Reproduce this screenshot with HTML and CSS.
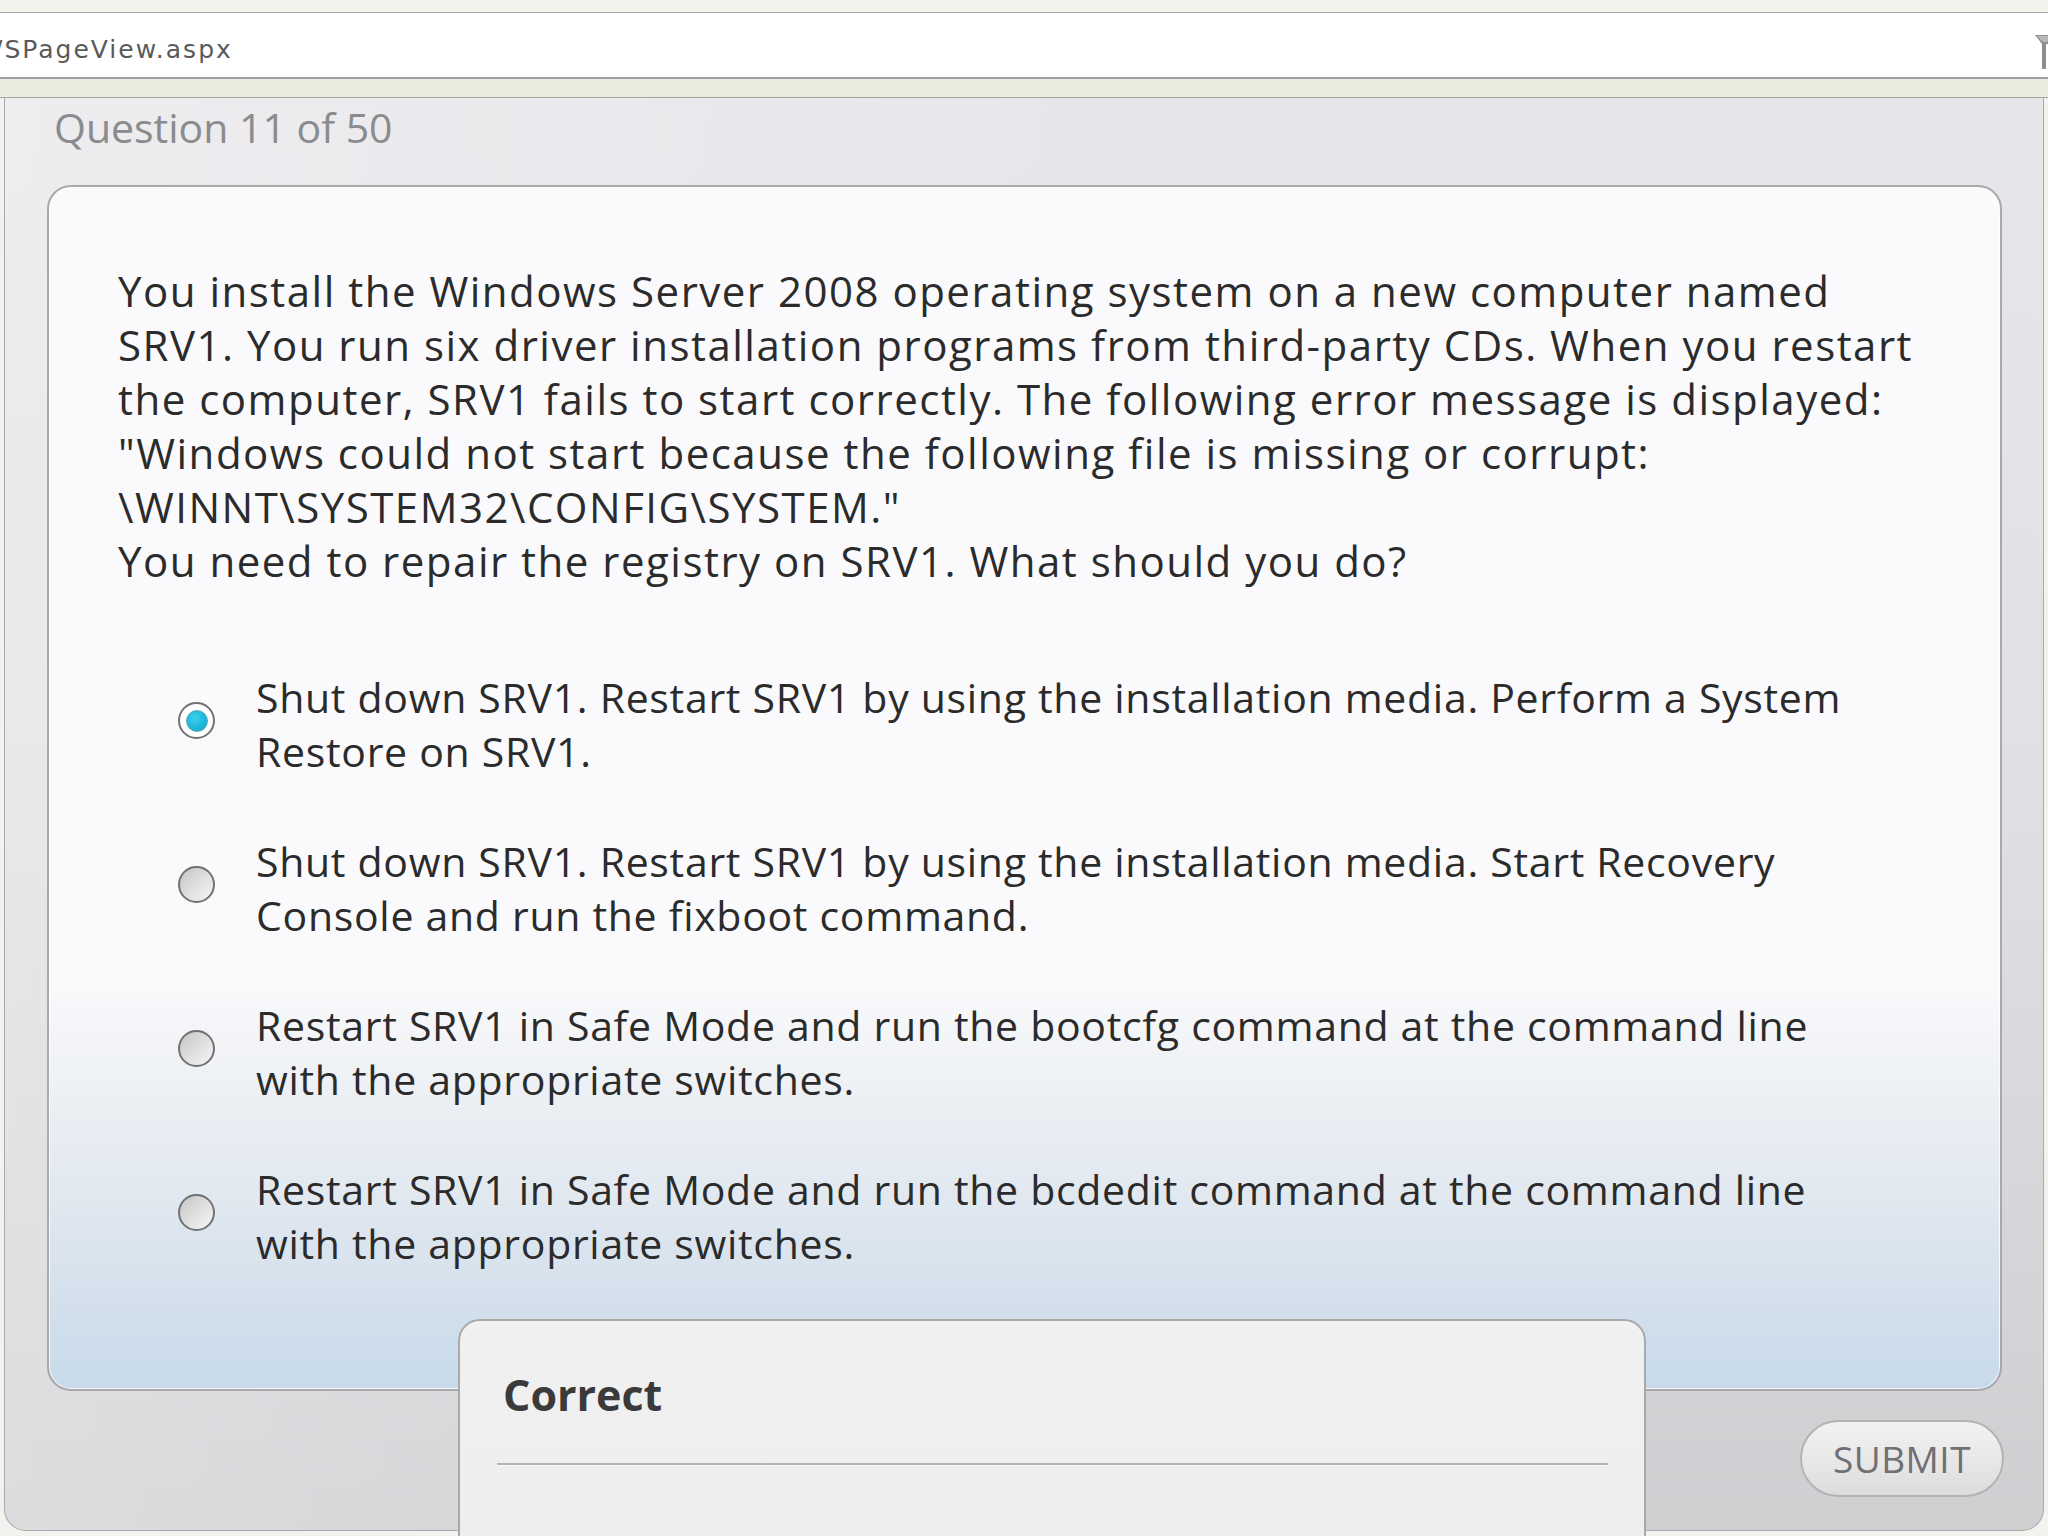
FILE: index.html
```html
<!DOCTYPE html>
<html>
<head>
<meta charset="utf-8">
<title>Question 11 of 50</title>
<link rel="stylesheet" href="styles.css">
</head>
<body>
<div class="topstrip"></div>
<div class="addressbar">
  <span class="url">/SPageView.aspx</span>
  <svg class="funnel" width="20" height="36" viewBox="0 0 20 36"><polygon points="0,0 20,0 20,9 11,9 11,34 7,34 7,9" fill="#8e8e8e"/><polygon points="2,1 18,1 12,7 8,7" fill="#b9b9b9"/></svg>
</div>
<div class="tabstrip"></div>
<div class="stage">
  <div class="panel">
    <div class="qheader">Question 11 of 50</div>
    <div class="card">
      <p class="question">You install the Windows Server 2008 operating system on a new computer named<br>SRV1. You run six driver installation programs from third-party CDs. When you restart<br>the computer, SRV1 fails to start correctly. The following error message is displayed:<br>"Windows could not start because the following file is missing or corrupt:<br>\WINNT\SYSTEM32\CONFIG\SYSTEM."<br>You need to repair the registry on SRV1. What should you do?</p>
      <div class="options">
        <div class="option">
          <span class="radio selected"><span class="dot"></span></span>
          <span class="otext">Shut down SRV1. Restart SRV1 by using the installation media. Perform a System<br>Restore on SRV1.</span>
        </div>
        <div class="option">
          <span class="radio"></span>
          <span class="otext">Shut down SRV1. Restart SRV1 by using the installation media. Start Recovery<br>Console and run the fixboot command.</span>
        </div>
        <div class="option">
          <span class="radio"></span>
          <span class="otext">Restart SRV1 in Safe Mode and run the bootcfg command at the command line<br>with the appropriate switches.</span>
        </div>
        <div class="option">
          <span class="radio"></span>
          <span class="otext">Restart SRV1 in Safe Mode and run the bcdedit command at the command line<br>with the appropriate switches.</span>
        </div>
      </div>
    </div>
    <div class="footer">
      <button class="submit">SUBMIT</button>
    </div>
  </div>
  <div class="feedback">
    <div class="ftitle">Correct</div>
    <div class="fsep"></div>
  </div>
</div>
</body>
</html>
```
FILE: styles.css
```css
html, body {
  margin: 0;
  padding: 0;
}
body {
  width: 2048px;
  height: 1536px;
  overflow: hidden;
  background: #f3f2ee;
  font-family: "Open Sans", "Noto Sans", sans-serif;
  position: relative;
}
.topstrip {
  height: 12px;
  background: #f4f2ec;
  border-bottom: 1px solid #a6a69e;
}
.addressbar {
  height: 58px;
  padding-top: 6px;
  background: #ffffff;
  border-bottom: 2px solid #a0a0a0;
  display: flex;
  justify-content: space-between;
  align-items: flex-start;
  overflow: hidden;
}
.url {
  font-family: "DejaVu Sans", sans-serif;
  font-size: 25px;
  line-height: 62px;
  height: 58px;
  color: #5a5a5a;
  margin-left: -6px;
  letter-spacing: 2px;
}
.funnel {
  flex: none;
  margin-top: 16px;
  margin-right: -7px;
}
.tabstrip {
  height: 18px;
  background: #ecebdf;
  border-bottom: 1px solid #a3a3a0;
}
.stage {
  position: relative;
  padding: 0 4px;
}
.panel {
  height: 1433px;
  box-sizing: border-box;
  border: 1px solid #a9a9ab;
  border-top: none;
  border-radius: 0 0 22px 22px;
  background:
    linear-gradient(to right, rgba(255,255,255,0.28), rgba(255,255,255,0) 55%),
    linear-gradient(to bottom, #e7e6ea 0%, #e1e0e4 45%, #cfcfd2 100%);
  padding: 4px 41px 0 42px;
}
.qheader {
  font-size: 41px;
  line-height: 50px;
  color: #8b8b8d;
  padding-left: 7px;
  margin-bottom: 33px;
}
.card {
  height: 1206px;
  box-sizing: border-box;
  border: 2px solid #a9a9ac;
  border-radius: 24px;
  box-shadow: inset 0 0 0 1px rgba(255,255,255,0.8);
  background: linear-gradient(to bottom, #fafafc 0%, #fafafc 66%, #f1f3f6 72%, #e4eaf1 82%, #d3e0ec 93%, #c8daea 100%);
  padding: 77px 0 0 69px;
}
.question {
  margin: 0;
  font-size: 42px;
  line-height: 54px;
  letter-spacing: 1.5px;
  color: #2b2b2b;
  white-space: nowrap;
}
.options {
  margin-top: 82px;
  margin-left: 60px;
  display: flex;
  flex-direction: column;
  gap: 56px;
}
.option {
  display: flex;
  align-items: flex-start;
  gap: 41px;
}
.otext {
  font-size: 41px;
  line-height: 54px;
  letter-spacing: 0.7px;
  color: #2b2b2b;
  white-space: nowrap;
}
.radio {
  flex: none;
  width: 37px;
  height: 37px;
  box-sizing: border-box;
  margin-top: 32px;
  border-radius: 50%;
  border: 2px solid #727272;
  background: linear-gradient(135deg, #c4c4c4 0%, #dcdcdc 45%, #f6f6f6 100%);
  display: flex;
  align-items: center;
  justify-content: center;
}
.radio.selected {
  background: #ffffff;
}
.dot {
  width: 22px;
  height: 22px;
  box-sizing: border-box;
  border-radius: 50%;
  border: 1px solid #5aa9b9;
  background: radial-gradient(circle at 40% 35%, #3fd0ee 0%, #1ab6d8 60%, #14a2c4 100%);
}
.footer {
  display: flex;
  justify-content: flex-end;
  padding-top: 29px;
}
.submit {
  width: 204px;
  height: 77px;
  margin-right: -2px;
  border: 2px solid #b3b3b5;
  border-radius: 39px;
  background: linear-gradient(to bottom, #f2f2f3 0%, #e6e6e7 60%, #dcdcde 100%);
  font-family: "Open Sans", "Noto Sans", sans-serif;
  font-size: 37px;
  color: #707072;
  letter-spacing: 0.5px;
  padding: 0;
}
.feedback {
  position: absolute;
  left: 458px;
  top: 1221px;
  width: 1188px;
  height: 320px;
  box-sizing: border-box;
  border: 2px solid #a9a9a9;
  border-radius: 22px;
  background: linear-gradient(to bottom, #f1f1f1, #ececec);
  padding: 44px 36px 0 37px;
}
.ftitle {
  font-size: 43px;
  line-height: 60px;
  font-weight: 700;
  color: #3a3a3a;
  padding-left: 6px;
}
.fsep {
  margin-top: 38px;
  height: 2px;
  background: #b4b4b4;
  box-shadow: 0 1px 0 #fafafa;
}
```
